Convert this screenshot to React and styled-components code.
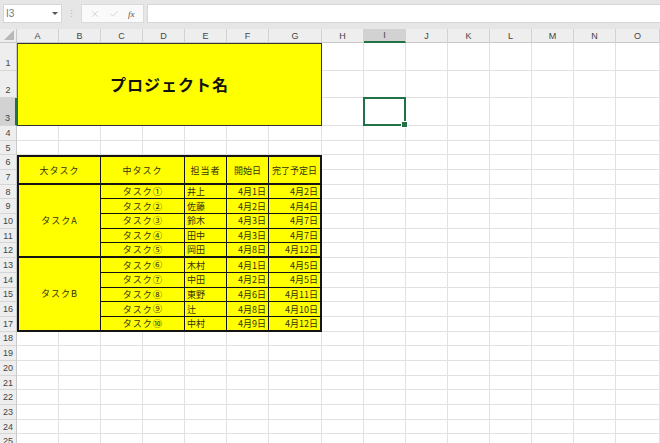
import React from 'react'
import styled, { createGlobalStyle } from 'styled-components';
import { X, Check } from 'lucide-react';

const GlobalStyle = createGlobalStyle`
  body {
    margin: 0;
    background: #ffffff;
    font-family: "Liberation Sans", "Noto Sans CJK JP", sans-serif;
    overflow: hidden;
  }
`

const Toolbar = styled.div`
  height: 29px;
  box-sizing: border-box;
  background: #e6e6e6;
  display: flex;
  align-items: flex-start;
  padding: 4px 0 0 3px;
`
const NameBox = styled.div`
  width: 59px;
  height: 19px;
  box-sizing: border-box;
  background: #ffffff;
  border: 1px solid #d6d6d6;
  display: flex;
  align-items: center;
  justify-content: space-between;
  padding: 0 3px 0 2px;
  font-size: 10px;
  color: #777;
`
const Arrow = styled.span`
  width: 0;
  height: 0;
  border-left: 3px solid transparent;
  border-right: 3px solid transparent;
  border-top: 3px solid #555;
`
const Dots = styled.div`
  width: 19px;
  height: 19px;
  display: flex;
  align-items: center;
  justify-content: center;
  color: #b4b4b4;
  font-size: 9px;
`
const FuncBox = styled.div`
  width: 63px;
  height: 19px;
  box-sizing: border-box;
  background: #fafafa;
  border: 1px solid #dadada;
  display: flex;
  align-items: center;
  justify-content: space-around;
  padding: 0 4px;
  color: #c2c2c2;
`
const Fx = styled.span`
  font-family: "Liberation Serif", serif;
  font-style: italic;
  font-size: 9px;
  color: #555;
`
const FormulaInput = styled.div`
  flex: 1;
  height: 19px;
  margin-left: 3px;
  box-sizing: border-box;
  background: #ffffff;
  border: 1px solid #d6d6d6;
  border-right: none;
`

const Sheet = styled.div`
  display: grid;
  grid-template-columns: 17px repeat(6, 42px) 53px repeat(7, 42px) minmax(42px, 1fr);
  grid-template-rows: 14px repeat(3, 27.67px) repeat(22, 14.7px);
`
const Corner = styled.div`
  grid-column: 1;
  grid-row: 1;
  background: #eeeeee;
  border-right: 1px solid #c8c8c8;
  border-bottom: 1px solid #c8c8c8;
  display: flex;
  align-items: flex-end;
  justify-content: flex-end;
  padding: 0 2px 2px 0;
`
const ColHead = styled.div`
  grid-column: ${p => p.$col};
  grid-row: 1;
  background: ${p => p.$active ? '#d2d2d2' : '#eeeeee'};
  border-right: 1px solid #d2d2d2;
  border-bottom: ${p => p.$active ? '2px solid #217346' : '1px solid #c8c8c8'};
  display: flex;
  align-items: center;
  justify-content: center;
  font-size: 9px;
  color: #444;
`
const RowHead = styled.div`
  grid-column: 1;
  grid-row: ${p => p.$row};
  background: ${p => p.$active ? '#d2d2d2' : '#eeeeee'};
  border-right: ${p => p.$active ? '2px solid #217346' : '1px solid #c8c8c8'};
  border-bottom: 1px solid #d6d6d6;
  display: flex;
  align-items: ${p => p.$tall ? 'flex-end' : 'center'};
  justify-content: center;
  padding-bottom: ${p => p.$tall ? '2px' : '0'};
  font-size: 9px;
  color: #444;
`
const Blank = styled.div`
  grid-column: ${p => p.$col};
  grid-row: ${p => p.$row};
  border-right: 1px solid #e1e1e1;
  border-bottom: 1px solid #e1e1e1;
`
const Selected = styled.div`
  grid-column: ${p => p.$col};
  grid-row: ${p => p.$row};
  position: relative;
  border: 2px solid #217346;
  margin: -1px 0 0 -1px;
`
const Handle = styled.span`
  position: absolute;
  right: -4px;
  bottom: -4px;
  width: 5px;
  height: 5px;
  background: #217346;
  border: 1px solid #ffffff;
`
const TitleCell = styled.div`
  grid-column: 2 / 9;
  grid-row: 2 / 5;
  background: #ffff00;
  border: 1.5px solid #333;
  border-left-color: #2f6b4a;
  display: flex;
  align-items: center;
  justify-content: center;
  font-family: "Noto Sans CJK JP", sans-serif;
  font-weight: 700;
  font-size: 16px;
  letter-spacing: 1px;
  color: #111;
`
const TCell = styled.div`
  grid-column: ${p => p.$col};
  grid-row: ${p => p.$row};
  background: #ffff00;
  display: flex;
  align-items: center;
  justify-content: ${p => p.$align === 'left' ? 'flex-start' : p.$align === 'right' ? 'flex-end' : 'center'};
  padding: 0 2px;
  border-style: solid;
  border-color: #141414;
  border-width: ${p => `${p.$bt || 0}px ${p.$br || 1}px ${p.$bb || 1}px ${p.$bl || 0}px`};
  font-family: "Noto Sans CJK JP", sans-serif;
  font-size: 9px;
  line-height: 1;
  letter-spacing: ${p => p.$spaced ? '1px' : '0'};
  color: #33330a;
  white-space: nowrap;
`
const Circled = styled.span`
  font-size: 9.4px;
  line-height: 1;
  letter-spacing: 0;
`

const colLetters = ['A', 'B', 'C', 'D', 'E', 'F', 'G', 'H', 'I', 'J', 'K', 'L', 'M', 'N', 'O'];
const ROWS = 25;

const groups = [
  {
    name: 'タスクA',
    items: [
      ['①', '井上', '4月1日', '4月2日'],
      ['②', '佐藤', '4月2日', '4月4日'],
      ['③', '鈴木', '4月3日', '4月7日'],
      ['④', '田中', '4月3日', '4月7日'],
      ['⑤', '岡田', '4月8日', '4月12日'],
    ],
  },
  {
    name: 'タスクB',
    items: [
      ['⑥', '木村', '4月1日', '4月5日'],
      ['⑦', '中田', '4月2日', '4月5日'],
      ['⑧', '東野', '4月6日', '4月11日'],
      ['⑨', '辻', '4月8日', '4月10日'],
      ['⑩', '中村', '4月9日', '4月12日'],
    ],
  },
];

// cells hidden under the title, the table and the selected cell
const covered = (r, c) => {
  if (r >= 1 && r <= 3 && c <= 6) return true;
  if (r >= 6 && r <= 17 && c <= 6) return true;
  if (r === 3 && c === 8) return true;
  return false;
};

const App = () => {
  const blanks = [];
  for (let r = 1; r <= ROWS; r++) {
    for (let c = 0; c < colLetters.length; c++) {
      if (!covered(r, c)) blanks.push(<Blank key={`${r}-${c}`} $row={r + 1} $col={c + 2} />);
    }
  }

  return (
    <>
      <GlobalStyle />
      <Toolbar>
        <NameBox>I3<Arrow /></NameBox>
        <Dots>⋮</Dots>
        <FuncBox>
          <X size={10} strokeWidth={1.5} />
          <Check size={10} strokeWidth={1.5} />
          <Fx>fx</Fx>
        </FuncBox>
        <FormulaInput />
      </Toolbar>
      <Sheet>
        <Corner>
          <svg width="10" height="10" viewBox="0 0 10 10">
            <polygon points="10,0 10,10 0,10" fill="#b8b8b8" />
          </svg>
        </Corner>
        {colLetters.map((l, i) => (
          <ColHead key={l} $col={i + 2} $active={l === 'I'}>{l}</ColHead>
        ))}
        {Array.from({ length: ROWS }, (_, i) => (
          <RowHead key={i} $row={i + 2} $active={i === 2} $tall={i < 3}>{i + 1}</RowHead>
        ))}
        {blanks}

        <TitleCell>プロジェクト名</TitleCell>
        <Selected $row={4} $col={10}><Handle /></Selected>

        <TCell $col="2 / 4" $row="7 / 9" $bt={2} $bl={2} $bb={2} $spaced>大タスク</TCell>
        <TCell $col="4 / 6" $row="7 / 9" $bt={2} $bb={2} $spaced>中タスク</TCell>
        <TCell $col="6" $row="7 / 9" $bt={2} $bb={2} $spaced>担当者</TCell>
        <TCell $col="7" $row="7 / 9" $bt={2} $bb={2}>開始日</TCell>
        <TCell $col="8" $row="7 / 9" $bt={2} $bb={2} $br={2}>完了予定日</TCell>

        {groups.map((g, gi) => {
          const start = 8 + gi * 5;
          return (
            <React.Fragment key={g.name}>
              <TCell $col="2 / 4" $row={`${start + 1} / ${start + 6}`} $bl={2} $bb={2} $spaced>{g.name}</TCell>
              {g.items.map((it, k) => {
                const row = start + k + 1;
                const bb = k === 4 ? 2 : 1;
                return (
                  <React.Fragment key={it[0]}>
                    <TCell $col="4 / 6" $row={row} $bb={bb} $spaced>タスク<Circled>{it[0]}</Circled></TCell>
                    <TCell $col="6" $row={row} $bb={bb} $align="left">{it[1]}</TCell>
                    <TCell $col="7" $row={row} $bb={bb} $align="right">{it[2]}</TCell>
                    <TCell $col="8" $row={row} $bb={bb} $br={2} $align="right">{it[3]}</TCell>
                  </React.Fragment>
                );
              })}
            </React.Fragment>
          );
        })}
      </Sheet>
    </>
  )
}

export default App;
